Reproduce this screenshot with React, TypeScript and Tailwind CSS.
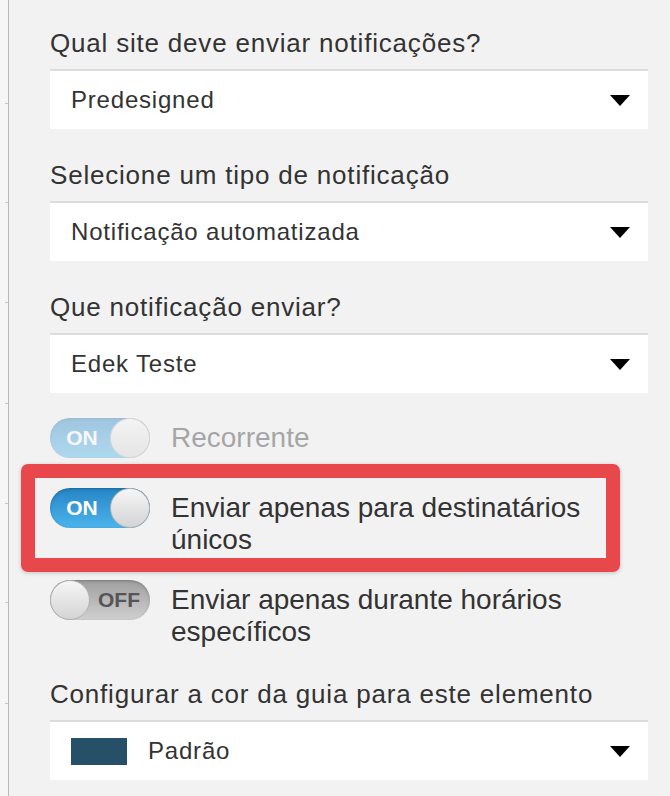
import React from 'react';

const font = { fontFamily: '"Liberation Sans", Arial, sans-serif' };

const Caret = () => (
  <svg width="20" height="11" viewBox="0 0 20 11" className="shrink-0">
    <path d="M0 0 H20 L10 11 Z" fill="#000" />
  </svg>
);

interface SelectProps {
  value: string;
  swatch?: string;
}

const Select: React.FC<SelectProps> = ({ value, swatch }) => (
  <div className="flex h-[60px] items-center justify-between border-t-2 border-[#dcdcdc] bg-white pl-[21px] pr-[18px]">
    <div className="flex items-center gap-[21px]">
      {swatch && <span className="h-[27px] w-[56px]" style={{ backgroundColor: swatch }} />}
      <span className="text-[24px] tracking-[0.8px] text-[#333]">{value}</span>
    </div>
    <Caret />
  </div>
);

const Field: React.FC<{ label: string; value: string; swatch?: string }> = ({ label, value, swatch }) => (
  <div className="flex flex-col">
    <label className="mb-[12px] text-[26px] leading-[28px] tracking-[0.8px] text-[#333]">{label}</label>
    <Select value={value} swatch={swatch} />
  </div>
);

const Knob = ({ side }: { side: 'left' | 'right' }) => (
  <span
    className={`absolute top-0 h-[40px] w-[40px] rounded-full border border-[#b3b3b3] bg-gradient-to-b from-[#f6f6f6] to-[#d4d4d4] ${
      side === 'left' ? 'left-0' : 'right-0'
    }`}
  />
);

const Toggle: React.FC<{ on: boolean }> = ({ on }) => {
  if (on) {
    return (
      <div className="relative flex h-[40px] w-[100px] shrink-0 items-center rounded-full bg-gradient-to-b from-[#2585c6] to-[#4cb4ec] shadow-[inset_0_1px_3px_rgba(0,0,0,0.25)]">
        <span className="w-[64px] text-center text-[21px] font-bold text-white">ON</span>
        <Knob side="right" />
      </div>
    );
  }
  return (
    <div className="relative flex h-[40px] w-[100px] shrink-0 items-center justify-end rounded-full bg-gradient-to-b from-[#9f9f9f] to-[#d0d0d0] shadow-[inset_0_1px_3px_rgba(0,0,0,0.25)]">
      <span className="w-[62px] text-center text-[21px] font-bold text-[#555]">OFF</span>
      <Knob side="left" />
    </div>
  );
};

const ToggleRow: React.FC<{ on: boolean; text: string; disabled?: boolean; className?: string }> = ({
  on,
  text,
  disabled,
  className = '',
}) => (
  <div className={`flex items-start gap-[21px] ${disabled ? 'opacity-40' : ''} ${className}`}>
    <Toggle on={on} />
    <span className="pt-[4px] text-[28px] leading-[32px] text-[#333]">{text}</span>
  </div>
);

const Rail = () => (
  <div className="relative w-[9px] shrink-0 border-r border-[#b8b8b8] bg-[#f6f6f6]">
    {[103, 202, 302, 403, 503, 602, 703].map((y) => (
      <span key={y} className="absolute left-[5px] h-px w-[3px] bg-[#c8c8c8]" style={{ top: y }} />
    ))}
  </div>
);

export default function App() {
  return (
    <div className="flex h-[796px] w-[670px] overflow-hidden bg-[#f2f2f2]" style={font}>
      <Rail />
      <div className="relative flex flex-1 flex-col pl-[41px] pr-[22px] pt-[29px]">
        <div className="flex flex-col gap-[32px]">
          <Field label="Qual site deve enviar notificações?" value="Predesigned" />
          <Field label="Selecione um tipo de notificação" value="Notificação automatizada" />
          <Field label="Que notificação enviar?" value="Edek Teste" />
        </div>

        <div className="mt-[25px] flex flex-col pr-[40px]">
          <ToggleRow on disabled text="Recorrente" className="mb-[30px]" />
          <ToggleRow on text="Enviar apenas para destinatários únicos" className="mb-[24px]" />
          <ToggleRow on={false} text="Enviar apenas durante horários específicos" />
        </div>

        <div className="mt-[32px]">
          <Field label="Configurar a cor da guia para este elemento" value="Padrão" swatch="#255068" />
        </div>

        {/* annotation box */}
        <div className="pointer-events-none absolute left-[12px] top-[464px] h-[108px] w-[599px] rounded-[7px] border-[14px] border-[#e8484c] shadow-[0_1px_4px_rgba(0,0,0,0.2)]" />
      </div>
    </div>
  );
}
